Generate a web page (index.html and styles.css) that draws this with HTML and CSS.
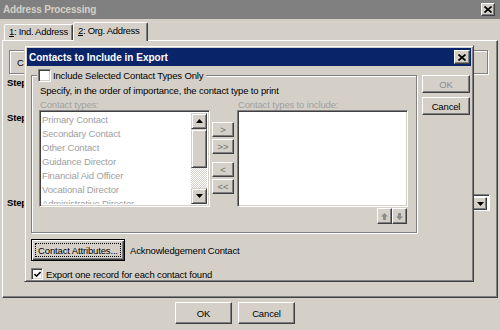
FILE: index.html
```html
<!DOCTYPE html>
<html lang="en">
<head>
  <meta charset="UTF-8">
  <title>Address Processing</title>
  <link rel="stylesheet" href="styles.css">
</head>
<body>
  <div class="window">
    <div class="caption caption-inactive">
      <span class="caption-text">Address Processing</span>
      <span class="caption-btn">
        <svg width="8" height="7" viewBox="0 0 8 7"><path d="M0.5 0.5L7.5 6.5M7.5 0.5L0.5 6.5" stroke="#000" stroke-width="1.7"/></svg>
      </span>
    </div>

    <div class="tabs">
      <div class="tab"><u>1</u>: Ind. Address</div>
      <div class="tab tab-active"><u>2</u>: Org. Address</div>
    </div>

    <div class="tab-panel">
      <div class="panel-group">C</div>
      <div class="step step-first">Step</div>
      <div class="step step-second">Step</div>
      <div class="step-row">
        <span class="step">Step</span>
        <div class="combo">
          <span class="combo-btn">
            <svg width="7" height="4" viewBox="0 0 7 4"><path d="M0 0H7L3.5 4z"/></svg>
          </span>
        </div>
      </div>
    </div>

    <div class="footer">
      <button class="btn btn-footer">OK</button>
      <button class="btn btn-footer">Cancel</button>
    </div>

    <!-- modal dialog floating over the tab page -->
    <div class="dialog">
      <div class="caption caption-active">
        <span class="caption-text">Contacts to Include in Export</span>
        <span class="caption-btn">
          <svg width="8" height="7" viewBox="0 0 8 7"><path d="M0.5 0.5L7.5 6.5M7.5 0.5L0.5 6.5" stroke="#000" stroke-width="1.7"/></svg>
        </span>
      </div>

      <div class="dialog-body">
        <div class="dialog-main">
          <fieldset class="group">
            <legend class="group-legend">
              <span class="check"></span>
              <span>Include Selected Contact Types Only</span>
            </legend>

            <div class="hint">Specify, in the order of importance, the contact type to print</div>

            <div class="list-labels">
              <span class="list-label list-label-left">Contact types:</span>
              <span class="list-label">Contact types to include:</span>
            </div>

            <div class="list-row">
              <div class="listbox">
                <ul class="list-items">
                  <li>Primary Contact</li>
                  <li>Secondary Contact</li>
                  <li>Other Contact</li>
                  <li>Guidance Director</li>
                  <li>Financial Aid Officer</li>
                  <li>Vocational Director</li>
                  <li>Administrative Director</li>
                </ul>
                <div class="scrollbar">
                  <span class="scroll-btn">
                    <svg width="7" height="4" viewBox="0 0 7 4"><path d="M3.5 0L7 4H0z"/></svg>
                  </span>
                  <span class="scroll-thumb"></span>
                  <span class="scroll-track"></span>
                  <span class="scroll-btn">
                    <svg width="7" height="4" viewBox="0 0 7 4"><path d="M0 0H7L3.5 4z"/></svg>
                  </span>
                </div>
              </div>

              <div class="move-buttons">
                <button class="btn btn-move">&gt;</button>
                <button class="btn btn-move">&gt;&gt;</button>
                <button class="btn btn-move btn-move-gap">&lt;</button>
                <button class="btn btn-move">&lt;&lt;</button>
              </div>

              <div class="listbox listbox-empty"></div>
            </div>

            <div class="order-buttons">
              <button class="btn btn-order">
                <svg width="7" height="7" viewBox="0 0 7 7"><path d="M3.5 0L7 3.5H5V7H2V3.5H0z" fill="#8c8c8c"/></svg>
              </button>
              <button class="btn btn-order">
                <svg width="7" height="7" viewBox="0 0 7 7"><path d="M3.5 7L7 3.5H5V0H2V3.5H0z" fill="#8c8c8c"/></svg>
              </button>
            </div>
          </fieldset>

          <div class="attr-row">
            <button class="btn btn-default"><span class="focus-rect">Contact Attributes...</span></button>
            <span>Acknowledgement Contact</span>
          </div>

          <label class="check-row">
            <span class="check check-small">
              <svg width="7" height="7" viewBox="0 0 7 7"><path d="M0.5 3L2.5 5.2L6.5 1" fill="none" stroke="#000" stroke-width="1.6"/></svg>
            </span>
            <span>Export one record for each contact found</span>
          </label>
        </div>

        <div class="dialog-side">
          <button class="btn btn-side btn-disabled">OK</button>
          <button class="btn btn-side">Cancel</button>
        </div>
      </div>
    </div>
  </div>
</body>
</html>
```

FILE: styles.css
```css
* {
  box-sizing: border-box;
}

body {
  margin: 0;
  font-family: "Liberation Sans", Arial, sans-serif;
  font-size: 9.5px;
  letter-spacing: -0.15px;
  color: #000;
  white-space: nowrap;
}

.window {
  position: relative;
  width: 500px;
  height: 330px;
  background: #d4d0c8;
  overflow: hidden;
  display: flex;
  flex-direction: column;
}

/* caption bars */
.caption {
  height: 19px;
  display: flex;
  align-items: center;
  justify-content: space-between;
  padding: 0 5px 0 3px;
  font-weight: bold;
  font-size: 10px;
  letter-spacing: 0;
}

.caption-inactive {
  background: #808080;
  color: #d4d0c8;
  letter-spacing: -0.2px;
}

.caption-active {
  height: 18px;
  background: #0a246a;
  color: #fff;
  padding: 0 1px 0 2px;
}

.caption-btn {
  width: 16px;
  height: 14px;
  display: flex;
  align-items: center;
  justify-content: center;
  background: #d4d0c8;
  border: 1px solid;
  border-color: #fff #404040 #404040 #fff;
  box-shadow: inset -1px -1px #808080;
}

.caption-inactive .caption-btn {
  width: 14px;
  height: 13px;
}

/* generic 3d button */
.btn {
  font: inherit;
  letter-spacing: inherit;
  color: #000;
  background: #d4d0c8;
  border: 1px solid;
  border-color: #fff #404040 #404040 #fff;
  box-shadow: inset -1px -1px #808080;
  padding: 0;
  display: flex;
  align-items: center;
  justify-content: center;
}

.btn-disabled {
  color: #8c8c8c;
}

/* tabs */
.tabs {
  display: flex;
  align-items: flex-end;
  height: 21px;
  padding-left: 4px;
}

.tab {
  height: 16px;
  padding: 0 0 0 4px;
  width: 69px;
  line-height: 14px;
  letter-spacing: -0.3px;
  border-top: 1px solid #fff;
  border-left: 1px solid #fff;
  border-right: 1px solid #404040;
  box-shadow: inset -1px 0 #808080;
  border-radius: 2px 2px 0 0;
}

.tab-active {
  position: relative;
  z-index: 1;
  width: 75px;
  height: 19px;
  margin-bottom: -1px;
  background: #d4d0c8;
  line-height: 16px;
}

.tab-panel {
  margin-left: 2px;
  width: 496px;
  height: 258px;
  border: 1px solid;
  border-color: #fff #404040 #404040 #fff;
  box-shadow: inset -1px -1px #808080;
}

.panel-group {
  width: 479px;
  height: 24px;
  margin: 9px 0 0 6px;
  padding: 6px 0 0 7px;
  border: 1px solid #808080;
  box-shadow: 1px 1px 0 #fff, inset 1px 1px 0 #fff;
}

.step {
  font-weight: bold;
  line-height: 12px;
  padding-left: 4px;
}

.step-first {
  margin-top: 3px;
}

.step-second {
  margin-top: 23px;
}

.step-row {
  display: flex;
  align-items: center;
  margin-top: 70px;
  padding-right: 7px;
}

.combo {
  margin-left: auto;
  width: 420px;
  height: 17px;
  display: flex;
  justify-content: flex-end;
  padding: 2px;
  background: #fff;
  border: 1px solid;
  border-color: #808080 #fff #fff #808080;
  box-shadow: inset 1px 1px #404040;
}

.combo-btn {
  width: 14px;
  height: 13px;
  display: flex;
  align-items: center;
  justify-content: center;
  background: #d4d0c8;
  border: 1px solid;
  border-color: #fff #404040 #404040 #fff;
  box-shadow: inset -1px -1px #808080;
}

.footer {
  display: flex;
  gap: 6px;
  padding: 4px 0 0 175px;
}

.btn-footer {
  width: 57px;
  height: 22px;
}

/* dialog window */
.dialog {
  position: absolute;
  left: 24px;
  top: 45px;
  width: 450px;
  height: 237px;
  background: #d4d0c8;
  border: 1px solid;
  border-color: #d4d0c8 #404040 #404040 #d4d0c8;
  box-shadow: inset 1px 1px #fff, inset -1px -1px #808080;
  padding: 2px;
}

.dialog-body {
  display: flex;
  padding-left: 4px;
}

.group {
  width: 386px;
  margin: 3px 0 0 0;
  padding: 0 8px 8px 7px;
  border: 1px solid #808080;
  box-shadow: 1px 1px 0 #fff, inset 1px 1px 0 #fff;
}

.group-legend {
  display: flex;
  align-items: center;
  gap: 2px;
  padding: 0 3px 0 1px;
  margin-left: -2px;
  background: #d4d0c8;
  line-height: 13px;
}

.check {
  width: 13px;
  height: 13px;
  display: flex;
  align-items: center;
  justify-content: center;
  background: #fff;
  border: 1px solid;
  border-color: #808080 #fff #fff #808080;
  box-shadow: inset 1px 1px #404040, inset -1px -1px #d4d0c8;
}

.check-small {
  width: 12px;
  height: 12px;
}

.hint {
  margin-top: 3px;
  padding-left: 1px;
  line-height: 12px;
}

.list-labels {
  display: flex;
  margin-top: 2px;
  line-height: 11px;
  color: #a0a0a0;
}

.list-label-left {
  width: 199px;
  padding-left: 1px;
}

.list-row {
  display: flex;
  height: 97px;
}

.listbox {
  width: 171px;
  display: flex;
  background: #fff;
  border: 1px solid;
  border-color: #808080 #fff #fff #808080;
  box-shadow: inset 1px 1px #404040, inset -1px -1px #d4d0c8;
  padding: 2px;
  overflow: hidden;
}

.list-items {
  flex: 1;
  margin: 0;
  padding: 0;
  list-style: none;
  color: #a0a0a0;
  line-height: 14px;
  overflow: hidden;
}

.scrollbar {
  width: 16px;
  display: flex;
  flex-direction: column;
}

.scroll-btn {
  height: 16px;
  display: flex;
  align-items: center;
  justify-content: center;
  background: #d4d0c8;
  border: 1px solid;
  border-color: #d4d0c8 #404040 #404040 #d4d0c8;
  box-shadow: inset 1px 1px #fff, inset -1px -1px #808080;
}

.scroll-thumb {
  height: 39px;
  background: #d4d0c8;
  border: 1px solid;
  border-color: #d4d0c8 #404040 #404040 #d4d0c8;
  box-shadow: inset 1px 1px #fff, inset -1px -1px #808080;
}

.scroll-track {
  flex: 1;
  background: repeating-conic-gradient(#fff 0 25%, #d4d0c8 0 50%) 0 0 / 2px 2px;
}

.move-buttons {
  width: 22px;
  margin: 12px 3px 0 2px;
  display: flex;
  flex-direction: column;
  gap: 2px;
}

.btn-move {
  height: 15px;
  color: #707070;
}

.btn-move-gap {
  margin-top: 6px;
}

.order-buttons {
  display: flex;
  justify-content: flex-end;
  padding-right: 1px;
  margin-top: 1px;
}

.btn-order {
  width: 15px;
  height: 16px;
}

.attr-row {
  display: flex;
  align-items: center;
  gap: 5px;
  margin-top: 6px;
}

.btn-default {
  width: 94px;
  height: 22px;
  border: 1px solid #000;
  box-shadow: inset 1px 1px #fff, inset -1px -1px #404040, inset -2px -2px #808080;
  padding: 3px;
}

.focus-rect {
  width: 100%;
  height: 100%;
  display: flex;
  align-items: center;
  justify-content: center;
  border: 1px dotted #000;
}

.check-row {
  display: flex;
  align-items: center;
  gap: 3px;
  margin-top: 7px;
}

.dialog-side {
  display: flex;
  flex-direction: column;
  gap: 4px;
  margin: 9px 0 0 5px;
}

.btn-side {
  width: 48px;
  height: 18px;
}
```
